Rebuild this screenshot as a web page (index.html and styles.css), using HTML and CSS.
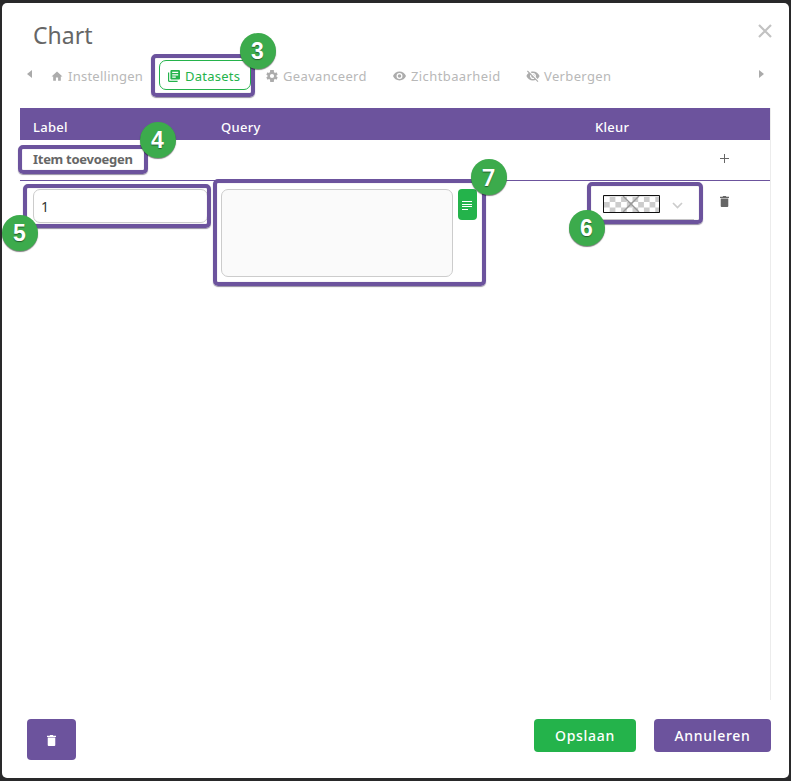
FILE: index.html
```
<!DOCTYPE html>
<html lang="nl">
<head>
<meta charset="utf-8">
<title>Chart</title>
<link rel="stylesheet" href="styles.css">
</head>
<body>
<svg class="defs" width="0" height="0">
  <symbol id="trash" viewBox="0 0 10 12"><path d="M3.500 0h3l.6.8H10V2H0V.8h2.900zM.8 2.600h8.400V11q0 1-1 1H1.800q-1 0-1-1z"/></symbol>
</svg>
<main class="modal">
  <header class="title"><h1>Chart</h1>
    <svg class="close" viewBox="0 0 14 14"><path d="M1 1l12 12M13 1L1 13"/></svg>
  </header>
  <nav class="tabs">
    <svg class="arrow left" viewBox="0 0 5 8"><path d="M5 0v8L0 4z"/></svg>
    <a class="tab home"><svg viewBox="1 2 22 20"><path d="M10 20v-6h4v6h5v-8h3L12 3 2 12h3v8z"/></svg><span>Instellingen</span></a>
    <a class="tab active"><svg viewBox="2 2 20 20"><path d="M4 6H2v14c0 1.100.9 2 2 2h14v-2H4V6zm16-4H8c-1.100 0-2 .9-2 2v12c0 1.100.9 2 2 2h12c1.100 0 2-.9 2-2V4c0-1.100-.9-2-2-2zm-1 9H9V9h10v2zm-4 4H9v-2h6v2zm4-8H9V5h10v2z"/></svg><span>Datasets</span></a>
    <a class="tab gear"><svg viewBox="2 2 20 20"><path fill-rule="evenodd" d="M19.400 13a8 8 0 0 0 0-2l2.100-1.600-2-3.500-2.500 1a7.500 7.500 0 0 0-1.700-1L15 2H9l-.4 3.900a7.500 7.500 0 0 0-1.700 1l-2.400-1-2 3.500L4.600 11a8 8 0 0 0 0 2l-2.100 1.600 2 3.500 2.500-1a7.500 7.500 0 0 0 1.700 1L9 22h6l.4-3.900a7.500 7.500 0 0 0 1.700-1l2.400 1 2-3.500zM12 15.500a3.500 3.500 0 1 1 0-7 3.500 3.500 0 0 1 0 7z"/></svg><span>Geavanceerd</span></a>
    <a class="tab eye"><svg viewBox="1 4 22 16"><path d="M12 4.500C7 4.500 2.700 7.600 1 12c1.700 4.400 6 7.500 11 7.500s9.300-3.100 11-7.500c-1.700-4.400-6-7.500-11-7.500zM12 17a5 5 0 1 1 0-10 5 5 0 0 1 0 10zm0-8a3 3 0 1 0 0 6 3 3 0 0 0 0-6z"/></svg><span>Zichtbaarheid</span></a>
    <a class="tab hide"><svg viewBox="1 2 22 20"><path d="M12 7a5 5 0 0 1 4.600 6.800l3 3A12 12 0 0 0 23 12C21.300 7.600 17 4.500 12 4.500c-1.400 0-2.700.2-4 .7l2.200 2.200C10.700 7.100 11.300 7 12 7zM2 4.300l2.700 2.700A12 12 0 0 0 1 12c1.700 4.400 6 7.500 11 7.500 1.600 0 3-.3 4.400-.8l3.300 3.300 1.300-1.300L3.300 3zM7.500 9.800l1.600 1.500a3 3 0 0 0 3.600 3.600l1.500 1.600A5 5 0 0 1 7.500 9.800zm4.300-.8l3.200 3.200V12a3 3 0 0 0-3-3z"/></svg><span>Verbergen</span></a>
    <svg class="arrow right" viewBox="0 0 5 8"><path d="M0 0v8l5-4z"/></svg>
  </nav>
  <section class="table">
    <div class="row head"><span class="th-label">Label</span><span class="th-query">Query</span><span class="th-color">Kleur</span><span></span></div>
    <div class="row add"><b>Item toevoegen</b><span></span><span></span>
      <svg class="plus" viewBox="0 0 9 9"><path d="M4.500 0v9M0 4.500h9"/></svg></div>
    <div class="row item">
      <div class="field">1</div>
      <div class="query"><div class="area"></div><div class="expr"><svg viewBox="0 0 10 9"><path d="M0 .5h10M0 3.500h10M0 5.500h10M0 8.500h6"/></svg></div></div>
      <div class="picker">
        <svg class="swatch" viewBox="0 0 57 18">
          <defs><pattern id="check" x="1" y="-4" width="11.400" height="11" patternUnits="userSpaceOnUse"><path fill="#ccc" d="M0 0h5.700v5.500H0zM5.700 5.500h5.700V11H5.700z"/></pattern></defs>
          <path fill="#fff" d="M0 0h57v18H0z"/><path fill="url(#check)" d="M0 0h57v18H0z"/>
          <path fill="none" stroke="#999" stroke-width="1.400" d="M20 1l16 16M36 1L20 17"/>
          <path fill="none" stroke="#111" d="M.5.5h56v17H.5z"/>
        </svg>
        <svg class="chevron" viewBox="0 0 11 7"><path d="M1 1l4.500 4.500L10 1"/></svg>
      </div>
      <svg class="trash"><use href="#trash"/></svg>
    </div>
  </section>
  <footer>
    <button class="delete"><svg><use href="#trash"/></svg></button>
    <button class="save"><span>Opslaan</span></button>
    <button class="cancel"><span>Annuleren</span></button>
  </footer>
</main>
<div class="mark m3"></div><div class="mark m4"></div><div class="mark m5"></div><div class="mark m7"></div><div class="mark m6"></div>
<div class="badge b3">3</div><div class="badge b4">4</div><div class="badge b5">5</div><div class="badge b6">6</div><div class="badge b7">7</div>
</body>
</html>
```
FILE: styles.css
```
* { box-sizing: border-box; }
body { margin: 0; padding: 3px 2px; height: 781px; overflow: hidden; background: #29292a; font: 13px "Noto Sans", sans-serif; color: #666; position: relative; }
.defs { position: absolute; }
svg { display: block; flex: none; fill: currentColor; }
.modal { width: 787px; height: 775px; background: #fff; border-radius: 5px; display: flex; flex-direction: column; }
.title { height: 57px; flex: none; display: flex; justify-content: space-between; padding: 16px 17px 0 31px; }
h1 { margin: 0; font-size: 23px; font-weight: 400; line-height: 32px; letter-spacing: 0; }
.close { width: 14px; height: 14px; margin-top: 5px; fill: none; stroke: #c2c2c2; stroke-width: 2.200; }
.tabs { height: 48px; display: flex; padding: 0 25px; flex: none; color: #b8b8b8; }
.arrow { width: 5px; height: 8px; margin-top: 10px; color: #aaa; }
.right { margin-left: auto; }
.tab { height: 30px; display: flex; align-items: center; line-height: 20px; white-space: nowrap; letter-spacing: .25px; }
.tab svg { width: 12px; height: 12px; margin-top: 2px; color: #acacac; }
.tab span { padding-top: 2px; margin-left: 5px; }
.home { width: 127px; padding-left: 19px; }
.home svg { height: 11px; }
.active { width: 92px; padding-left: 8px; border: 1px solid #24b34b; border-radius: 7px; color: #24b34b; }
.active svg { color: #24b34b; }
.gear { width: 127px; padding-left: 15px; letter-spacing: .35px; }
.eye { width: 133px; padding-left: 15px; letter-spacing: .4px; }
.eye svg { width: 13px; height: 10px; }
.hide { padding-left: 15px; letter-spacing: .35px; }
.hide svg { width: 14px; height: 12px; }
.hide span { margin-left: 4px; }
.table { width: 751px; height: 592px; margin-left: 18px; border-right: 1px solid #ececec; }
.row { display: grid; grid-template-columns: 187px 375px 125px 63px; width: 750px; }
.head { height: 32px; background: #6c539d; color: #fff; font-weight: 500; line-height: 38px; letter-spacing: .3px; }
.head span, .add b { padding-left: 13px; }
.head .th-query { padding-left: 14px; }
.add { height: 41px; border-bottom: 1px solid #6c539d; line-height: 38px; }
.add b { white-space: nowrap; letter-spacing: -.28px; }
.plus { width: 9px; height: 9px; margin: 14px 0 0 13px; stroke: #666; fill: none; }
.item { padding-top: 8px; }
.field { width: 175px; height: 34px; margin-left: 13px; border: 1px solid #ccc; border-radius: 7px; padding-left: 7px; line-height: 34px; font-size: 14px; color: #333; }
.query { display: flex; gap: 5px; padding-left: 14px; }
.area { width: 232px; height: 88px; border: 1px solid #ccc; border-radius: 7px; background: #fafafa; }
.expr { width: 19px; height: 31px; border-radius: 4px; background: #24b34b; padding: 12px 0 0 4px; }
.expr svg { width: 10px; height: 9px; fill: none; stroke: #fff; stroke-width: 1; }
.picker { display: flex; width: 99px; height: 31px; margin-left: 13px; padding: 6px 0 0 8px; border-bottom: 1px solid #ccc; }
.swatch { width: 57px; height: 18px; }
.chevron { width: 11px; height: 7px; margin: 7px 0 0 12px; fill: none; stroke: #ccc; stroke-width: 1.700; }
.trash { width: 9px; height: 11px; margin: 7px 0 0 13px; }
footer { display: flex; padding: 19px 18px 0 25px; align-items: flex-start; }
button { border: 0; padding: 0; border-radius: 4px; background: #6c539d; color: #fff; height: 33px; font: 500 14px "Noto Sans", sans-serif; letter-spacing: .7px; display: grid; place-items: center; }
.delete { width: 49px; height: 41px; }
.delete svg { width: 9px; height: 11px; margin: 2px 1px 0 0; }
.save { width: 102px; margin-left: auto; background: #24b34b; }
.cancel { width: 117px; margin-left: 18px; }
.mark { position: absolute; border: 4px solid #6c539d; border-radius: 5px; box-shadow: 0 1px 1px 0 rgba(80,70,100,.6), inset 0 0 1px 0 rgba(80,70,100,.5); }
.m3 { left: 151px; top: 54px; width: 104px; height: 43px; }
.m4 { left: 18px; top: 145px; width: 130px; height: 29px; }
.m5 { left: 23px; top: 184px; width: 188px; height: 44px; }
.m7 { left: 213px; top: 179px; width: 273px; height: 107px; }
.m6 { left: 587px; top: 182px; width: 116px; height: 42px; }
.badge { position: absolute; width: 36px; height: 36px; border-radius: 50%; background: #3cab4c; color: #fff; font: bold 23px/37px "Liberation Sans", sans-serif; text-align: center; text-indent: -1px; text-shadow: 0 1px 1px rgba(0,0,0,.45); box-shadow: 0 1px 1px rgba(0,0,0,.5); }
.b3 { left: 240px; top: 33px; }
.b4 { left: 140px; top: 122px; }
.b5 { left: 2px; top: 215px; }
.b6 { left: 569px; top: 210px; }
.b7 { left: 471px; top: 159px; font-family: "Noto Sans", sans-serif; font-weight: 600; }
```
